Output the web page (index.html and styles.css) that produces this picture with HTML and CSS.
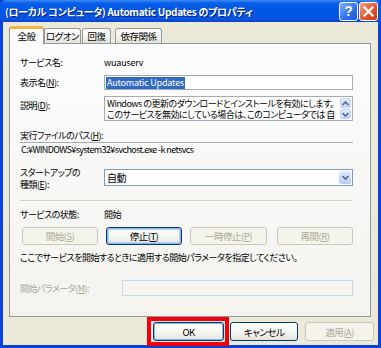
FILE: index.html
```html
<!DOCTYPE html>
<html lang="ja">
<head>
    <meta charset="UTF-8">
    <title>Automatic Updates のプロパティ</title>
    <link rel="stylesheet" href="styles.css">
</head>
<body>
    <div class="window">
        <div class="titlebar">
            <span class="title">(ローカル コンピュータ) Automatic Updates のプロパティ</span>
            <span class="cap-btn help">?</span>
            <span class="cap-btn close">
                <svg width="11" height="11" viewBox="0 0 11 11"><path d="M1.5 1.5 L9.5 9.5 M9.5 1.5 L1.5 9.5" stroke="#fff" stroke-width="2.2" stroke-linecap="square"/></svg>
            </span>
        </div>
        <div class="client">
            <div class="tabs">
                <span class="tab active">全般</span>
                <span class="tab t-logon">ログオン</span>
                <span class="tab t-recover">回復</span>
                <span class="tab t-deps">依存関係</span>
            </div>

            <div class="panel">
                <div class="row r-name">
                    <span class="label">サービス名:</span>
                    <span class="value latin">wuauserv</span>
                </div>

                <div class="row r-display">
                    <span class="label">表示名(<u>N</u>):</span>
                    <div class="edit"><span class="selected latin">Automatic Updates</span></div>
                </div>

                <div class="row r-desc">
                    <span class="label">説明(<u>D</u>):</span>
                    <div class="edit memo">
                        <div class="memo-text">
                            <div>Windows の更新のダウンロードとインストールを有効にします。</div>
                            <div>このサービスを無効にしている場合は、このコンピュータでは 自</div>
                        </div>
                        <div class="spin">
                            <span class="spin-btn"><svg width="7" height="5" viewBox="0 0 7 5"><path d="M0.5 4 L3.5 1 L6.5 4" fill="none" stroke="#4d6185" stroke-width="1.5"/></svg></span>
                            <span class="spin-btn"><svg width="7" height="5" viewBox="0 0 7 5"><path d="M0.5 1 L3.5 4 L6.5 1" fill="none" stroke="#4d6185" stroke-width="1.5"/></svg></span>
                        </div>
                    </div>
                </div>

                <div class="row r-pathlabel">
                    <span>実行ファイルのパス(<u>H</u>):</span>
                </div>
                <div class="row r-path">
                    <div class="path">C:¥WINDOWS¥system32¥svchost.exe -k netsvcs</div>
                </div>

                <div class="row r-startup">
                    <span class="label two-line">スタートアップの<br>種類(<u>E</u>):</span>
                    <div class="combo">
                        <span class="combo-text">自動</span>
                        <span class="combo-btn"><svg width="7" height="5" viewBox="0 0 7 5"><path d="M0.5 1 L3.5 4 L6.5 1" fill="none" stroke="#4d6185" stroke-width="1.5"/></svg></span>
                    </div>
                </div>

                <div class="separator"></div>

                <div class="row r-status">
                    <span class="label">サービスの状態:</span>
                    <span class="value">開始</span>
                </div>

                <div class="row r-buttons">
                    <button class="btn b-start" disabled>開始(<u>S</u>)</button>
                    <button class="btn b-stop focus">停止(<u>T</u>)</button>
                    <button class="btn b-pause" disabled>一時停止(<u>P</u>)</button>
                    <button class="btn b-resume" disabled>再開(<u>R</u>)</button>
                </div>

                <div class="row r-hint">
                    <span>ここでサービスを開始するときに適用する開始パラメータを指定してください。</span>
                </div>

                <div class="row r-params">
                    <span class="label wide disabled-text">開始パラメータ(<u>M</u>):</span>
                    <div class="edit params"></div>
                </div>
            </div>

            <div class="footer">
                <button class="btn b-ok latin">OK</button>
                <button class="btn b-cancel">キャンセル</button>
                <button class="btn b-apply" disabled>適用(<u>A</u>)</button>
            </div>
        </div>
        <div class="mark"></div>
    </div>
</body>
</html>
```

FILE: styles.css
```css
body {
    margin: 0;
    font-family: "Noto Sans CJK JP", sans-serif;
    font-size: 9px;
    line-height: 11px;
    letter-spacing: -0.5px;
    font-feature-settings: "palt";
    color: #000;
}
u {
    text-decoration: underline;
    text-underline-offset: 1px;
}
.latin {
    letter-spacing: -0.2px;
}
.window {
    position: relative;
    width: 381px;
    height: 348px;
    background: #0842d6;
    display: flex;
    flex-direction: column;
    box-sizing: border-box;
}
.titlebar {
    height: 22px;
    flex: none;
    display: flex;
    align-items: center;
    padding: 0 3px 0 5px;
    background: linear-gradient(#3d8cf7 0, #0a5fe6 3px, #0058e6 8px, #0055e5 14px, #0b56df 19px, #0842d6 22px);
    border-radius: 6px 6px 0 0;
}
.title {
    flex: 1;
    color: #fff;
    font-weight: bold;
    font-size: 10px;
    letter-spacing: -0.3px;
    text-shadow: 1px 1px 0 #0a1f86;
    white-space: nowrap;
}
.cap-btn {
    width: 17px;
    height: 17px;
    border: 1px solid #fff;
    border-radius: 3px;
    display: flex;
    align-items: center;
    justify-content: center;
    margin-left: 1px;
    margin-top: 1px;
    color: #fff;
    font-family: "Liberation Sans", sans-serif;
    font-weight: bold;
    font-size: 14px;
    letter-spacing: 0;
}
.help {
    background: linear-gradient(135deg, #7fb1ff, #2e6ef0 60%, #1d57d8);
}
.close {
    background: linear-gradient(135deg, #f3a488, #e3572e 55%, #c83a15);
}
.client {
    flex: 1;
    margin: 0 3px 3px 3px;
    background: #ece9d8;
    display: flex;
    flex-direction: column;
}
.tabs {
    height: 21px;
    flex: none;
    display: flex;
    align-items: flex-end;
    padding-left: 6px;
    position: relative;
    z-index: 1;
    font-size: 9.5px;
}
.tab {
    height: 15px;
    box-sizing: border-box;
    border: 1px solid #919b9c;
    border-bottom: none;
    border-radius: 3px 3px 0 0;
    background: linear-gradient(#fff, #f3f3ef 60%, #e4e2d8);
    display: flex;
    align-items: center;
    justify-content: center;
    white-space: nowrap;
}
.tab.active {
    width: 35px;
    height: 18px;
    margin-bottom: -1px;
    background: #fcfcfe;
    border-top: 3px solid #f7b43d;
    padding-bottom: 1px;
}
.t-logon { width: 37px; }
.t-recover { width: 29px; margin-left: 1px; }
.t-deps { width: 47px; margin-left: 4px; }

.panel {
    width: 362px;
    height: 274px;
    margin-left: 6px;
    box-sizing: border-box;
    border: 1px solid #919b9c;
    background: linear-gradient(#fcfcfe, #f4f3ee);
    padding: 0 17px 0 10px;
    display: flex;
    flex-direction: column;
}
.row {
    display: flex;
    align-items: center;
    flex: none;
    white-space: nowrap;
}
.label {
    width: 84px;
    flex: none;
}
.label.wide {
    width: 102px;
}
.two-line {
    line-height: 12px;
}
.disabled-text {
    color: #aca899;
}
.r-name { margin-top: 11px; height: 14px; }
.r-display { margin-top: 6px; height: 15px; }
.r-desc { margin-top: 6px; height: 25px; align-items: flex-start; }
.r-desc .label { padding-top: 4px; }
.r-pathlabel { margin-top: 8px; height: 12px; }
.r-path { margin-top: 1px; height: 14px; }
.r-startup { margin-top: 11px; height: 24px; }
.r-status { margin-top: 5px; height: 14px; }
.r-buttons { margin-top: 6px; height: 18px; }
.r-hint { margin-top: 5px; height: 14px; }
.r-params { margin-top: 16px; height: 16px; }

.edit {
    width: 249px;
    height: 15px;
    box-sizing: border-box;
    border: 1px solid #a5acb2;
    background: #fff;
    display: flex;
    align-items: center;
    padding-left: 1px;
}
.selected {
    background: #316ac5;
    color: #fff;
    line-height: 12px;
    padding: 0 1px;
}
.memo {
    height: 25px;
    align-items: flex-start;
    overflow: hidden;
}
.memo-text {
    flex: 1;
    overflow: hidden;
    line-height: 11px;
    padding: 1px 0 0 1px;
}
.spin {
    width: 11px;
    flex: none;
    display: flex;
    flex-direction: column;
    gap: 1px;
    padding: 1px 1px 0 2px;
}
.spin-btn {
    height: 10px;
    background: linear-gradient(#e2ebfe, #c1d3fb);
    border: 1px solid #c3d3fd;
    border-radius: 2px;
    box-sizing: border-box;
    display: flex;
    align-items: center;
    justify-content: center;
}
.path {
    width: 333px;
    height: 14px;
    box-sizing: border-box;
    border-top: 1px solid #a5acb2;
    padding-left: 1px;
    display: flex;
    align-items: center;
    letter-spacing: -0.6px;
}
.combo {
    width: 251px;
    height: 17px;
    box-sizing: border-box;
    border: 1px solid #7f9db9;
    background: #fff;
    display: flex;
    align-items: center;
    margin-top: -4px;
    font-size: 10px;
}
.combo-text {
    flex: 1;
    padding-left: 2px;
}
.combo-btn {
    width: 12px;
    height: 13px;
    margin-right: 1px;
    background: linear-gradient(#e2ebfe, #b7cbf8);
    border-radius: 2px;
    display: flex;
    align-items: center;
    justify-content: center;
}
.separator {
    flex: none;
    width: 332px;
    margin-top: 9px;
    border-top: 1px solid #d0d0bf;
    border-bottom: 1px solid #fff;
}
.params {
    width: 232px;
    height: 16px;
    background: transparent;
    border-color: #c9d6e6;
}

.btn {
    font-family: inherit;
    font-size: 9.5px;
    line-height: 12px;
    letter-spacing: -0.5px;
    font-feature-settings: "palt";
    height: 18px;
    padding: 0;
    box-sizing: border-box;
    border: 1px solid #003c74;
    border-radius: 3px;
    background: linear-gradient(#fff, #f4f4f0 60%, #e3e2da);
    color: #000;
    white-space: nowrap;
}
.btn:disabled {
    border-color: #c9c7ba;
    background: #f5f4ea;
    color: #aca899;
}
.btn.focus {
    box-shadow: inset 0 0 0 1px #8cb4f2, inset 0 0 0 2px #bcd4f6;
}
.b-start { width: 76px; margin-left: 2px; }
.b-stop { width: 76px; margin-left: 8px; }
.b-pause { width: 77px; margin-left: 8px; }
.b-resume { width: 76px; margin-left: 10px; }

.footer {
    display: flex;
    margin-top: 5px;
    padding-left: 150px;
}
.footer .btn {
    height: 19px;
}
.b-ok { width: 71px; box-shadow: inset 0 0 0 1px #8cb4f2; }
.b-cancel { width: 68px; margin-left: 6px; }
.b-apply { width: 69px; margin-left: 7px; }

.mark {
    position: absolute;
    left: 147px;
    top: 317px;
    width: 82px;
    height: 29px;
    box-sizing: border-box;
    border: 4px solid #f0000c;
}
```
